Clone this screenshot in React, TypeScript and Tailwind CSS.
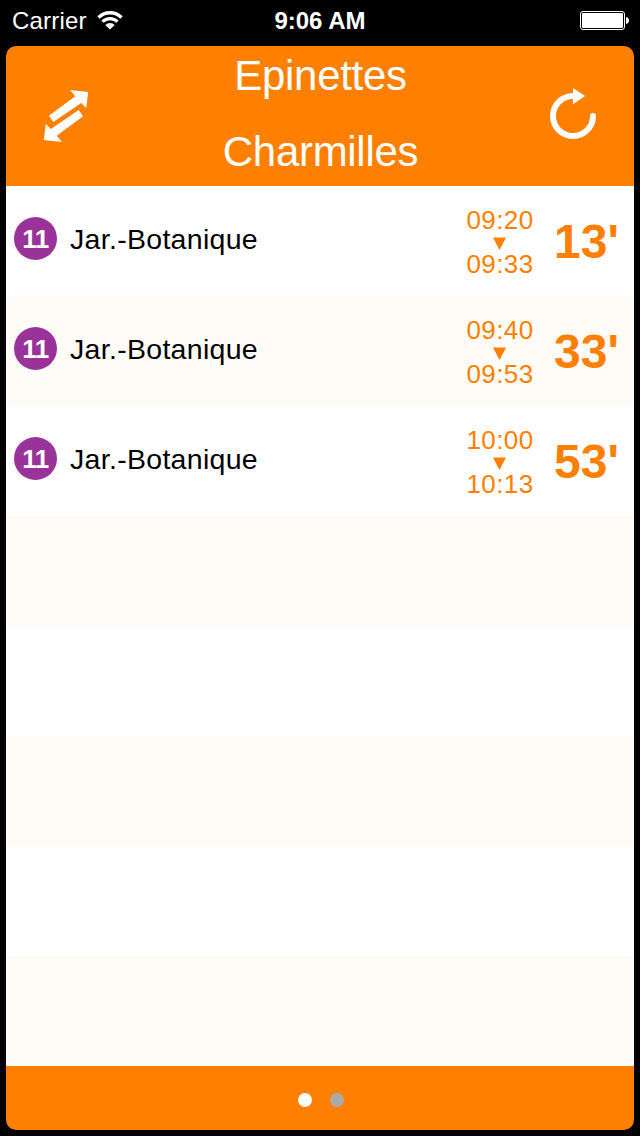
interface Departure {
  line: string;
  destination: string;
  from: string;
  to: string;
  minutes: number;
}

const departures: Departure[] = [
  { line: "11", destination: "Jar.-Botanique", from: "09:20", to: "09:33", minutes: 13 },
  { line: "11", destination: "Jar.-Botanique", from: "09:40", to: "09:53", minutes: 33 },
  { line: "11", destination: "Jar.-Botanique", from: "10:00", to: "10:13", minutes: 53 },
];

const ROW_COUNT = 8;

const StatusBar = () => (
  <div className="grid h-[46px] shrink-0 grid-cols-3 items-center pb-1 text-2xl leading-[40px] text-white">
    <div className="flex items-center pl-3">
      <span className="tracking-[0.2px]">Carrier</span>
      <svg className="mb-0.5 ml-2.5 h-[19px] w-[26px]" viewBox="0 0 26 19" fill="none">
        <path d="M1.500 6.500a16.300 16.300 0 0 1 23 0" stroke="white" strokeWidth="3.4" />
        <path d="M5.500 10.700a10.600 10.600 0 0 1 15 0" stroke="white" strokeWidth="3.2" />
        <path d="M8.300 14a6.600 6.600 0 0 1 9.400 0L13 18.500Z" fill="white" />
      </svg>
    </div>
    <span className="text-center font-bold">9:06 AM</span>
    <div className="flex justify-end pr-[11px]">
      <svg className="mb-0.5 h-[19px] w-[49px]" viewBox="0 0 49 19">
        <rect x="0.5" y="0.5" width="44" height="18" rx="2.5" fill="none" stroke="white" />
        <rect x="2" y="2" width="41" height="15" rx="1" fill="white" />
        <path d="M46 6c2 .4 3 1.800 3 3.500s-1 3.100-3 3.500Z" fill="white" />
      </svg>
    </div>
  </div>
);

const SwapIcon = () => (
  <svg className="h-[52px] w-[46px]" viewBox="0 0 46 52" fill="white">
    <path d="M45.200 1.900 43.200 17.900 38.200 13 10.300 32 5.900 25.800 32.300 6.300 27 0Z" />
    <path d="M0.800 50.100 2.800 34.100 7.800 39 35.700 20 40.100 26.200 13.700 45.700 19 52Z" />
  </svg>
);

const RefreshIcon = () => (
  <svg className="mb-1 h-[52px] w-[48px]" viewBox="0 0 48 52" fill="none">
    <path d="M24 8A20 20 0 1 0 44 28" stroke="white" strokeWidth="6" strokeLinecap="round" />
    <path d="M24 0 36.200 8 24 16.200Z" fill="white" />
  </svg>
);

const Header = () => (
  <header className="flex h-[140px] shrink-0 items-center justify-between bg-[#ff8000] px-[37px] text-white">
    <button aria-label="Swap stops">
      <SwapIcon />
    </button>
    <div className="flex flex-col items-center gap-4 pb-1 pl-[3px] text-[42px] leading-[60px] tracking-[-0.3px]">
      <span>Epinettes</span>
      <span>Charmilles</span>
    </div>
    <button aria-label="Refresh">
      <RefreshIcon />
    </button>
  </header>
);

const DepartureRow = ({ departure }: { departure?: Departure }) => (
  <li className="flex h-[110px] shrink-0 items-center bg-white px-2 even:bg-[#fffcf7]">
    {departure && (
      <>
        <span className="mb-[5px] flex size-[43px] items-center justify-center rounded-full bg-[#993399] pt-px text-[26px] font-bold tracking-[-0.5px] text-white">
          {departure.line}
        </span>
        <span className="ml-[13px] flex-1 pb-1 text-[28.5px] tracking-[0.3px] text-black">
          {departure.destination}
        </span>
        <div className="flex flex-col items-center pt-0.5 text-[26px] leading-7 tracking-[0.4px] text-[#ff8000]">
          <span>{departure.from}</span>
          <svg className="mr-px h-4 w-[13px]" viewBox="0 0 13 16">
            <path d="M0 3.500h13L6.500 16Z" fill="currentColor" />
          </svg>
          <span>{departure.to}</span>
        </div>
        <span className="ml-[20.5px] w-[72px] pt-0.5 text-5xl font-bold text-[#ff8000]">
          {departure.minutes}'
        </span>
      </>
    )}
  </li>
);

export default function App() {
  return (
    <div className="flex h-[1136px] w-[640px] flex-col bg-black font-['Liberation_Sans',Arial,sans-serif]">
      <StatusBar />
      <main className="mx-1.5 mb-1.5 flex flex-1 flex-col overflow-hidden rounded-[10px]">
        <Header />
        <ul className="flex flex-1 flex-col bg-white">
          {Array.from({ length: ROW_COUNT }, (_, i) => (
            <DepartureRow key={i} departure={departures[i]} />
          ))}
        </ul>
        <footer className="flex h-16 shrink-0 items-center justify-center gap-[18px] bg-[#ff8000] pt-1 pl-0.5">
          <span className="size-3.5 rounded-full bg-white" />
          <span className="size-3.5 rounded-full bg-[#aaaaaa]" />
        </footer>
      </main>
    </div>
  );
}
